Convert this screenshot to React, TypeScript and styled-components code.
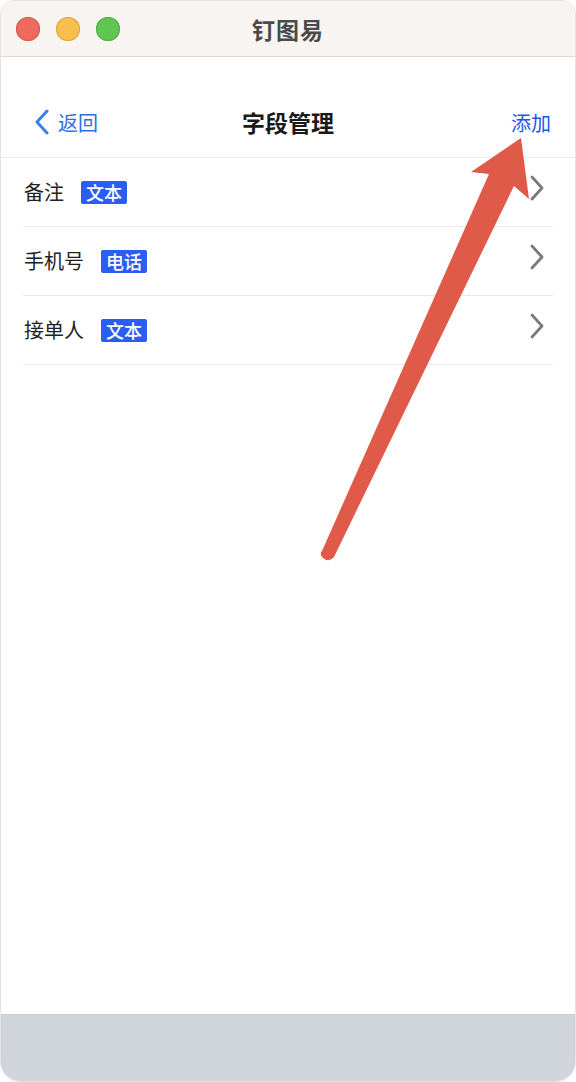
import React from 'react';
import styled, { createGlobalStyle } from 'styled-components';

const GlobalStyle = createGlobalStyle`
    html, body {
        margin: 0;
        padding: 0;
        background: #ffffff;
    }
    body {
        font-family: "Noto Sans CJK SC", "Noto Sans", sans-serif;
    }
`;

const Window = styled.div`
    position: relative;
    width: 576px;
    height: 1082px;
    box-sizing: border-box;
    display: flex;
    flex-direction: column;
    background: #ffffff;
    border: 1px solid #e4e4e4;
    border-radius: 14px 14px 20px 20px;
    overflow: hidden;
`;

const TitleBar = styled.div`
    height: 55px;
    flex-shrink: 0;
    display: flex;
    align-items: center;
    position: relative;
    background: #f8f4f1;
    border-bottom: 1px solid #d9d9d9;
    padding-left: 15px;
    gap: 16px;
`;

const Light = styled.span<{ $fill: string; $edge: string }>`
    width: 24px;
    height: 24px;
    border-radius: 50%;
    background: ${p => p.$fill};
    box-shadow: inset 0 0 0 1px ${p => p.$edge};
`;

const WindowTitle = styled.div`
    position: absolute;
    left: 0;
    right: 0;
    text-align: center;
    font-size: 23px;
    font-weight: 700;
    color: #4a4a4a;
    letter-spacing: 1px;
    pointer-events: none;
`;

const NavBar = styled.div`
    height: 101px;
    flex-shrink: 0;
    box-sizing: border-box;
    padding: 30px 24px 0 33px;
    display: flex;
    align-items: center;
    justify-content: space-between;
    position: relative;
    border-bottom: 1px solid #ededed;
`;

const BackButton = styled.div`
    display: flex;
    align-items: center;
    gap: 8px;
    font-size: 20px;
    color: #2f6fe6;
`;

const NavTitle = styled.div`
    position: absolute;
    left: 0;
    right: 0;
    top: 30px;
    bottom: 0;
    display: flex;
    align-items: center;
    justify-content: center;
    font-size: 23px;
    font-weight: 700;
    color: #1a1a1a;
    pointer-events: none;
`;

const AddButton = styled.div`
    font-size: 20px;
    color: #1d55ee;
`;

const List = styled.div`
    display: flex;
    flex-direction: column;
    padding: 0 22px;
`;

const Row = styled.div`
    height: 68px;
    display: flex;
    align-items: center;
    border-bottom: 1px solid #e8e8e8;
    padding-left: 1px;
    padding-right: 8px;
`;

const Label = styled.span`
    font-size: 20px;
    color: #222222;
    margin-top: -2px;
`;

const Badge = styled.span`
    margin-left: 17px;
    height: 23px;
    padding: 0 5px;
    display: inline-flex;
    align-items: center;
    background: #2a5ef3;
    border-radius: 2px;
    color: #ffffff;
    font-size: 18px;
    font-weight: 500;
    line-height: 1;
`;

const Chevron = styled.svg`
    margin-left: auto;
    margin-top: -8px;
`;

const Filler = styled.div`
    flex: 1;
`;

const BottomBar = styled.div`
    height: 66px;
    flex-shrink: 0;
    background: #d0d4db;
    border-top: 1px solid #c9ccd2;
`;

const ArrowOverlay = styled.svg`
    position: absolute;
    left: 0;
    top: 0;
    pointer-events: none;
`;

const fields = [
    { name: '备注', type: '文本' },
    { name: '手机号', type: '电话' },
    { name: '接单人', type: '文本' },
];

const App = () => {
    return (
        <>
            <GlobalStyle />
            <Window>
                <TitleBar>
                    <Light $fill="#ee6a5f" $edge="#d9574d" />
                    <Light $fill="#f6bf4f" $edge="#dea63b" />
                    <Light $fill="#61c554" $edge="#4fae43" />
                    <WindowTitle>钉图易</WindowTitle>
                </TitleBar>
                <NavBar>
                    <BackButton>
                        <svg width="16" height="26" viewBox="0 0 16 26">
                            <path d="M13 2 L3 13 L13 24" fill="none" stroke="#3a80ee" strokeWidth="3" strokeLinecap="round" strokeLinejoin="round" />
                        </svg>
                        返回
                    </BackButton>
                    <NavTitle>字段管理</NavTitle>
                    <AddButton>添加</AddButton>
                </NavBar>
                <List>
                    {fields.map(f => (
                        <Row key={f.name}>
                            <Label>{f.name}</Label>
                            <Badge>{f.type}</Badge>
                            <Chevron width="16" height="26" viewBox="0 0 16 26">
                                <path d="M3 2 L13 13 L3 24" fill="none" stroke="#7a7a7a" strokeWidth="2.8" strokeLinecap="round" strokeLinejoin="round" />
                            </Chevron>
                        </Row>
                    ))}
                </List>
                <Filler />
                <BottomBar />
                <ArrowOverlay width="576" height="1082" viewBox="0 0 576 1082">
                    <path
                        d="M520 137 L528 198 L513 185 L333 556 Q328 562 322 557 Q318 553 321 550 L488 173 L470 171 Z"
                        fill="#e05a4a"
                    />
                </ArrowOverlay>
            </Window>
        </>
    );
};

export default App;
